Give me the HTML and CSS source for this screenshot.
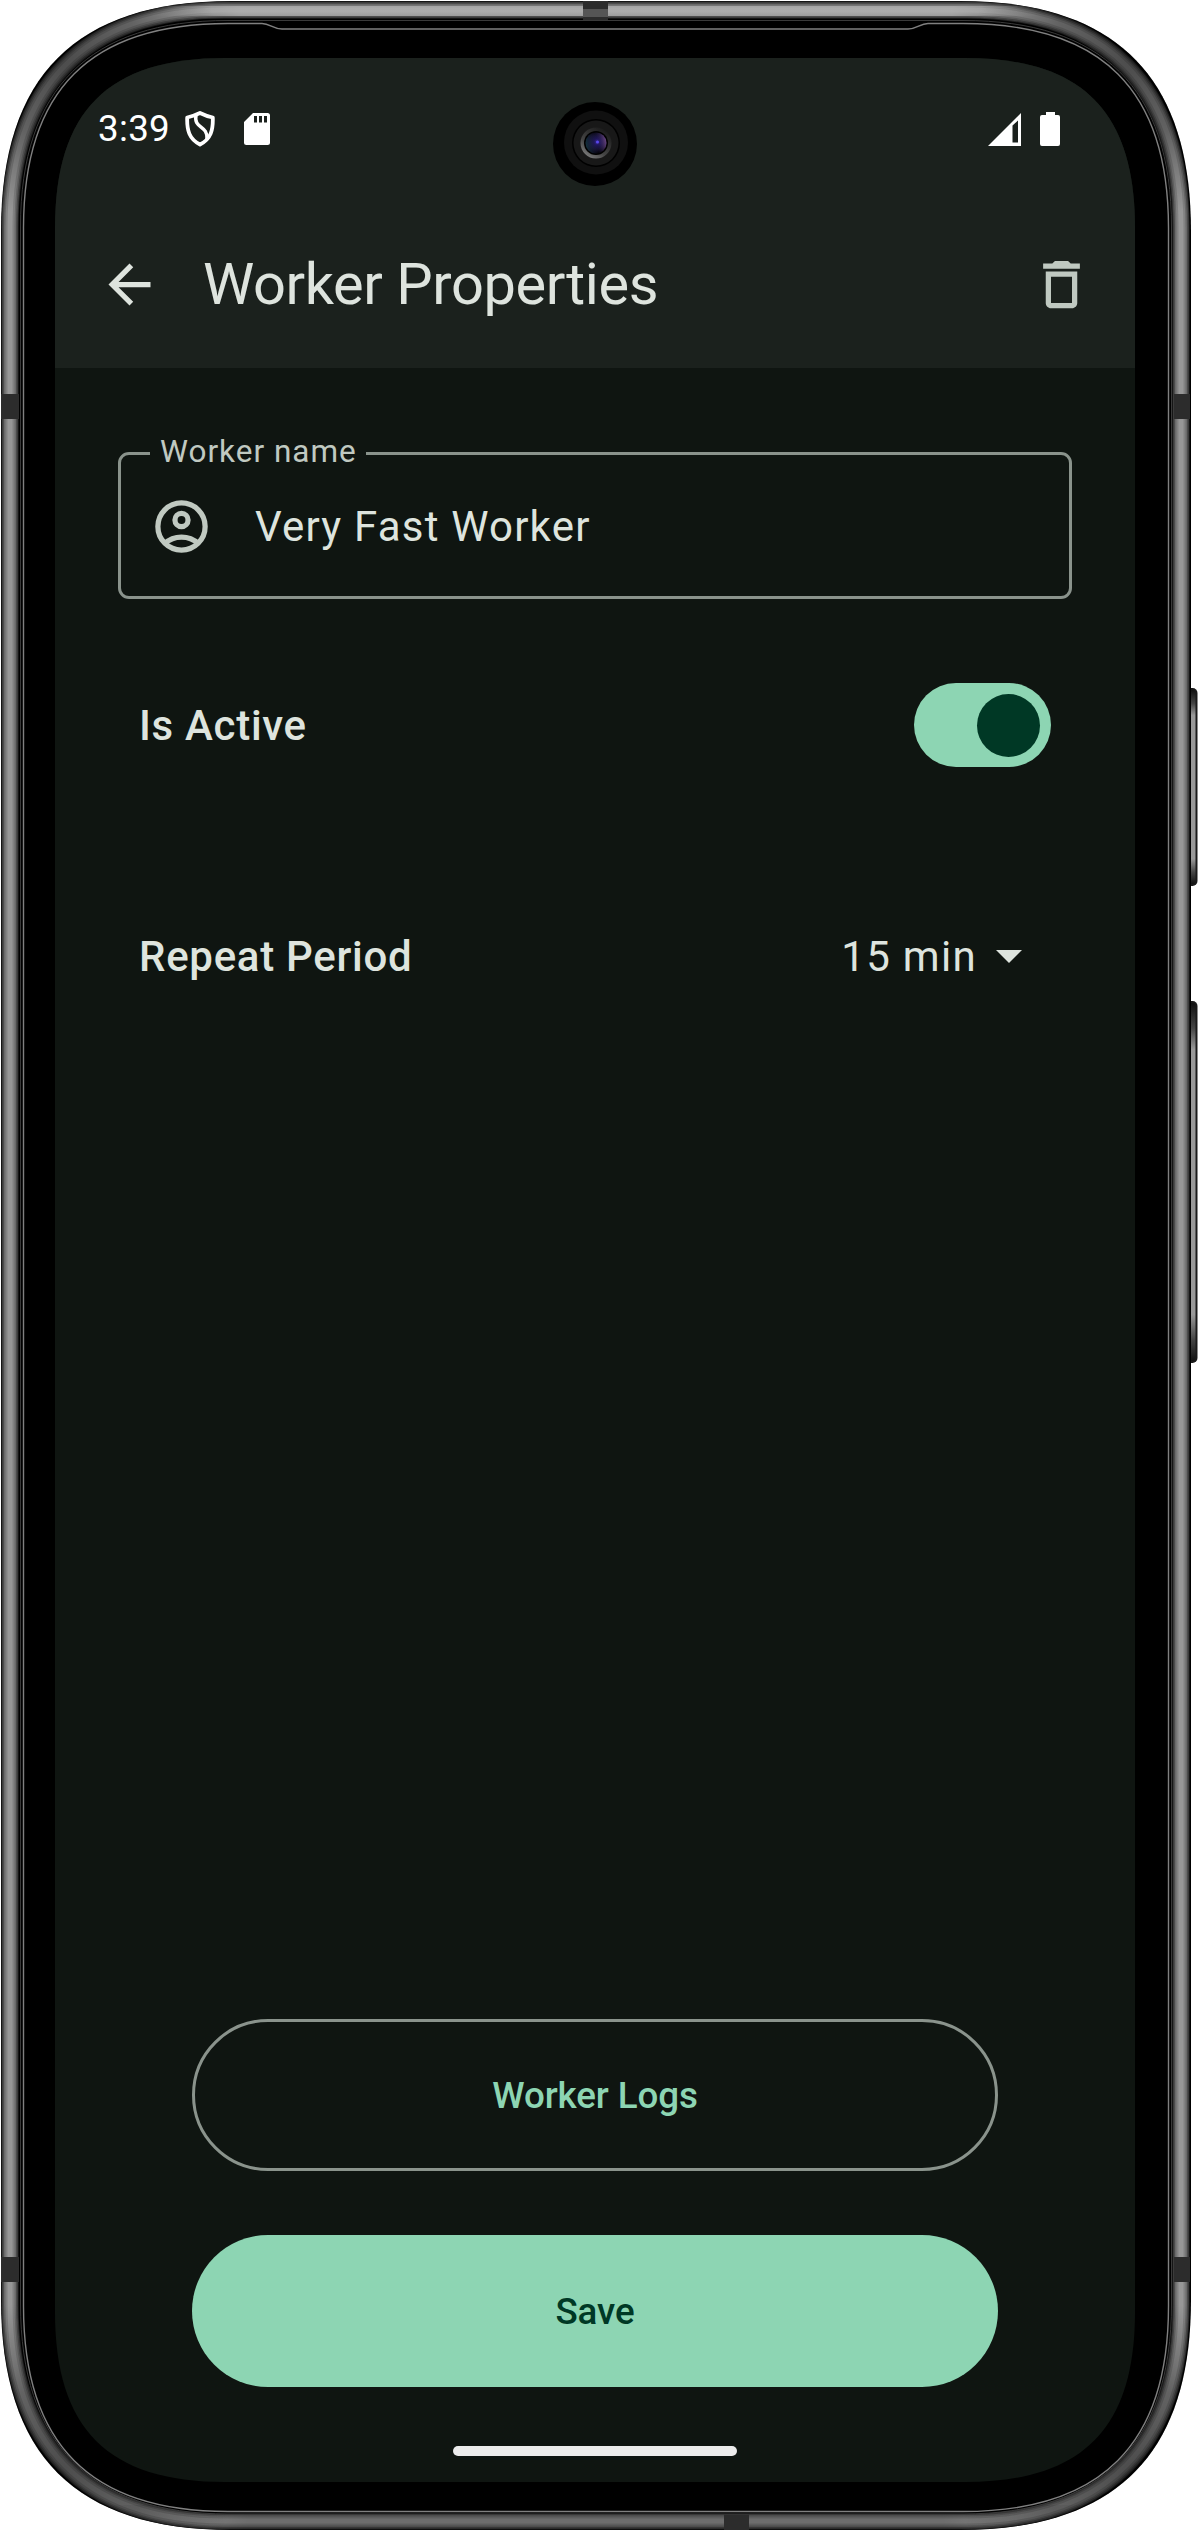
FILE: index.html
```html
<!DOCTYPE html>
<html lang="en">
<head>
<meta charset="utf-8">
<title>Worker Properties</title>
<link rel="stylesheet" href="styles.css">
</head>
<body>
<div class="phone">
  <svg class="frame" viewBox="0 0 1198 2531" aria-hidden="true">
    <defs>
      <path id="shell" d="M10 227C10 87 84 10 224 10H967C1107 10 1181 87 1181 227V2304C1181 2444 1107 2521 967 2521H224C84 2521 10 2444 10 2304Z"/>
      <clipPath id="body"><path d="M1 231C1 76 76 1 231 1H960C1115 1 1191 76 1191 231V2300C1191 2455 1115 2530 960 2530H231C76 2530 1 2455 1 2300Z"/></clipPath>
      <radialGradient id="shade"><stop offset="0" stop-color="#000" stop-opacity=".5"/><stop offset=".5" stop-color="#000" stop-opacity=".35"/><stop offset="1" stop-color="#000" stop-opacity="0"/></radialGradient>
      <linearGradient id="glow"><stop offset="0" stop-color="#b4b4b4" stop-opacity="0"/><stop offset=".1" stop-color="#b4b4b4"/><stop offset=".9" stop-color="#b4b4b4"/><stop offset="1" stop-color="#b4b4b4" stop-opacity="0"/></linearGradient>
      <linearGradient id="dusk"><stop offset="0" stop-color="#000" stop-opacity="0"/><stop offset=".15" stop-color="#000"/><stop offset=".85" stop-color="#000"/><stop offset="1" stop-color="#000" stop-opacity="0"/></linearGradient>
      <linearGradient id="key" x1="0" x2="0" y1="0" y2="1"><stop offset="0" stop-color="#111"/><stop offset=".07" stop-color="#444"/><stop offset=".13" stop-color="#999"/><stop offset=".87" stop-color="#999"/><stop offset=".94" stop-color="#444"/><stop offset="1" stop-color="#111"/></linearGradient>
      <radialGradient id="lens" cx=".55" cy=".45"><stop offset="0" stop-color="#3a2aa0"/><stop offset=".3" stop-color="#1e1658"/><stop offset=".7" stop-color="#151230"/><stop offset="1" stop-color="#07060f"/></radialGradient>
      <linearGradient id="rim" x1=".1" y1="1" x2=".8" y2="0"><stop offset="0" stop-color="#8a8a8a"/><stop offset=".4" stop-color="#444"/><stop offset="1" stop-color="#161616"/></linearGradient>
      <linearGradient id="glint" x1="0" y1=".4" x2="1" y2=".2"><stop offset="0" stop-color="#1d4a5a" stop-opacity=".6"/><stop offset=".5" stop-color="#201850" stop-opacity="0"/><stop offset="1" stop-color="#b070c8" stop-opacity=".7"/></linearGradient>
    </defs>
    <rect x="1186" y="688" width="11.5" height="198" rx="5" fill="#1a1a1a"/>
    <rect x="1186" y="690" width="9.5" height="194" rx="3" fill="url(#key)"/>
    <rect x="1186" y="1001" width="11.5" height="362" rx="5" fill="#1a1a1a"/>
    <rect x="1186" y="1003" width="9.5" height="358" rx="3" fill="url(#key)"/>
    <g clip-path="url(#body)">
      <rect width="1198" height="2531"/>
      <g fill="none">
        <use href="#shell" stroke="#2b2b2b" stroke-width="17"/>
        <use href="#shell" stroke="#4c4c4c" stroke-width="15"/>
        <use href="#shell" stroke="#6a6a6a" stroke-width="12"/>
        <use href="#shell" stroke="#828282" stroke-width="9"/>
        <use href="#shell" stroke="#979797" stroke-width="5"/>
      </g>
      <rect x="150" y="6" width="891" height="10" fill="url(#glow)" opacity=".7"/>
      <rect x="100" y="2505" width="991" height="26" fill="url(#dusk)" opacity=".28"/>
      <circle cx="60" cy="60" r="160" fill="url(#shade)"/>
      <circle cx="1131" cy="60" r="160" fill="url(#shade)"/>
      <circle cx="58" cy="2473" r="175" fill="url(#shade)"/>
      <circle cx="1133" cy="2473" r="175" fill="url(#shade)"/>
      <g fill="#2c2c2c">
        <rect x="583" y="1" width="25" height="20"/>
        <rect x="583" y="9" width="25" height="8" fill="#555"/>
        <rect x="1" y="394" width="18" height="25"/>
        <rect x="1174" y="394" width="16" height="25"/>
        <rect x="1" y="2257" width="18" height="25"/>
        <rect x="1174" y="2257" width="16" height="25"/>
        <rect x="724" y="2514" width="25" height="16"/>
      </g>
    </g>
    <path fill="#000" stroke="#3a3a3a" d="M20.500 227C20.500 88 90 20.500 228 20.500H963C1102 20.500 1171.500 88 1171.500 227V2304C1171.500 2443 1102 2514 963 2514H228C90 2514 20.500 2443 20.500 2304Z"/>
    <path fill="#000" stroke="#808080" stroke-width="1.400" d="M23.500 228C23.500 90 90 23.500 228 23.500H262C270 23.500 273 29 282 29H908C917 29 920 23.500 928 23.500H963C1102 23.500 1168.500 90 1168.500 228V2306C1168.500 2444 1102 2511.500 963 2511.500H228C90 2511.500 23.500 2444 23.500 2306Z"/>
  </svg>

  <main class="screen">
    <header class="top">
      <div class="status">
        <span class="time">3:39</span>
        <svg class="shield" viewBox="0 0 30 36" fill="none" stroke="#fff" stroke-width="3.800" stroke-linejoin="round"><path d="M15 2C10 4.500 6.500 5.500 2.200 6.500C1.800 19 4 28 15 33.500C26 28 28.200 19 27.800 6.500C23 5.500 20 4.500 15 2Z"/><path d="M11 4.500C8.500 18 23 14 22 28" stroke-width="3.400"/></svg>
        <svg class="sd" viewBox="0 0 26 32"><path fill="#fff" fill-rule="evenodd" d="M9 0H23.500Q26 0 26 2.500V29.500Q26 32 23.500 32H2.500Q0 32 0 29.500V9ZM10 3V9.500H13V3ZM15 3V9.500H18V3ZM20 3V9.500H23V3Z"/></svg>
        <svg class="signal" viewBox="0 0 33 33"><path fill="#fff" fill-rule="evenodd" d="M33 0V33H0ZM24.500 12.500V29.500H30V7.500Z"/></svg>
        <svg class="battery" viewBox="0 0 20 34"><path fill="#fff" d="M6 0H15V3H18Q20 3 20 5V32Q20 34 18 34H2Q0 34 0 32V5Q0 3 2 3H6Z"/></svg>
      </div>
      <div class="appbar">
        <svg class="icon back" viewBox="0 0 24 24"><path d="M20 11H7.830l5.590-5.590L12 4l-8 8 8 8 1.410-1.410L7.830 13H20z"/></svg>
        <h1>Worker Properties</h1>
        <svg class="icon trash" viewBox="0 0 24 24"><path d="M16 9v10H8V9h8m-1.500-6h-5l-1 1H5v2h14V4h-3.500l-1-1zM18 7H6v12c0 1.100.9 2 2 2h8c1.100 0 2-.9 2-2V7z"/></svg>
      </div>
    </header>

    <section class="form">
      <div class="field">
        <span class="label">Worker name</span>
        <svg class="icon" viewBox="0 0 24 24"><g class="line"><circle cx="12" cy="12" r="9"/><circle cx="12" cy="9.500" r="2.500"/><path d="M5.600 18.500C7.400 16.800 9.600 16 12 16S16.600 16.800 18.400 18.500"/></g></svg>
        <span class="value">Very Fast Worker</span>
      </div>
      <div class="row active">
        <span class="name">Is Active</span>
        <span class="switch"><span class="thumb"></span></span>
      </div>
      <div class="row period">
        <span class="name">Repeat Period</span>
        <span class="select">15 min<svg class="caret" viewBox="0 0 26 13"><path d="M0 0H26L13 13Z"/></svg></span>
      </div>
    </section>

    <footer class="actions">
      <div class="button outlined">Worker Logs</div>
      <div class="button filled">Save</div>
      <div class="home"></div>
    </footer>
  </main>

  <svg class="camera" viewBox="0 0 84 84" aria-hidden="true">
    <circle cx="42" cy="42" r="42"/>
    <circle cx="43" cy="40.500" r="32" fill="#101010"/>
    <circle cx="43" cy="41" r="24"/>
    <circle cx="43" cy="41" r="22.500" fill="#181818"/>
    <circle cx="43" cy="41" r="15.500" fill="url(#rim)"/>
    <circle cx="43" cy="41" r="12"/>
    <circle cx="43" cy="41" r="10.500" fill="url(#lens)"/>
    <circle cx="43" cy="41" r="10.500" fill="url(#glint)"/>
    <circle cx="44.500" cy="40" r="1.500" fill="#5a48f0"/>
  </svg>
</div>
</body>
</html>
```
FILE: styles.css
```css
* { box-sizing: border-box; }

body {
  margin: 0;
  background: #fff;
  font-family: Roboto, "Liberation Sans", sans-serif;
  color: #dee4de;
}

.phone {
  position: relative;
  width: 1198px;
  height: 2531px;
  padding: 58px 63px 49px 55px;
  overflow: hidden;
}

.frame {
  position: absolute;
  inset: 0;
  width: 1198px;
  height: 2531px;
}

.camera {
  position: absolute;
  left: 552.5px;
  top: 102px;
  width: 84px;
  height: 84px;
}

.screen {
  position: relative;
  display: flex;
  flex-direction: column;
  width: 1080px;
  height: 2424px;
  background: #0f1511;
  clip-path: path("M0 170C0 53 53 0 170 0H910C1027 0 1080 53 1080 170V2254C1080 2371 1027 2424 910 2424H170C53 2424 0 2371 0 2254Z");
}

.top {
  height: 310px;
  background: #1b211d;
}

.status {
  display: flex;
  align-items: center;
  height: 142px;
  padding: 0 75px 0 43px;
  color: #fff;
}

.time {
  width: 87px;
  font-size: 36.75px;
  letter-spacing: .3px;
  line-height: 44px;
}

.shield { width: 30px; height: 36px; }
.sd { width: 26px; height: 32px; margin-left: 29px; }
.signal { width: 33px; height: 33px; margin-left: auto; }
.battery { width: 20px; height: 34px; margin-left: 19px; }

.appbar {
  display: flex;
  align-items: center;
  height: 168px;
  padding: 0 42px 0 43px;
}

.icon {
  flex: none;
  width: 63px;
  height: 63px;
  fill: #c0c9c1;
}

.back { fill: #dee4de; }

.line {
  fill: none;
  stroke: #c0c9c1;
  stroke-width: 2;
}

h1 {
  flex: 1;
  margin: 0 0 0 42px;
  font-size: 57.75px;
  font-weight: 400;
  letter-spacing: -.4px;
  line-height: 74px;
}

.form { padding: 84px 63px 0; }

.field {
  position: relative;
  display: flex;
  align-items: center;
  gap: 42px;
  height: 147px;
  padding-left: 29px;
  border: 3px solid #8a938c;
  border-radius: 11px;
}

.field .icon { margin-top: 1px; }

.label {
  position: absolute;
  left: 29px;
  top: -24px;
  width: 216px;
  padding-left: 10px;
  background: #0f1511;
  color: #c0c9c1;
  font-size: 31.5px;
  letter-spacing: 1px;
  line-height: 42px;
  white-space: nowrap;
}

.value,
.select {
  font-size: 42px;
  letter-spacing: 1.31px;
  line-height: 63px;
}

.value {
  margin-top: 1px;
  letter-spacing: 1.2px;
}

.row {
  display: flex;
  align-items: center;
  justify-content: space-between;
  height: 84px;
  padding: 0 21px;
}

.active { margin-top: 84px; }
.period { margin-top: 147px; padding-right: 50px; }

.name {
  font-size: 42px;
  font-weight: 500;
  letter-spacing: .7px;
}

.switch {
  display: flex;
  align-items: center;
  justify-content: flex-end;
  width: 137px;
  height: 84px;
  padding-right: 11px;
  border-radius: 42px;
  background: #8dd5b3;
}

.thumb {
  width: 63px;
  height: 63px;
  border-radius: 50%;
  background: #003825;
}

.select {
  display: flex;
  align-items: center;
}

.caret {
  width: 26px;
  height: 13px;
  margin-left: 19px;
  fill: #dee4de;
}

.actions {
  display: flex;
  flex-direction: column;
  align-items: center;
  margin-top: auto;
  padding-bottom: 26px;
}

.button {
  display: flex;
  align-items: center;
  justify-content: center;
  width: 806px;
  height: 152px;
  border-radius: 76px;
  font-size: 36.75px;
  font-weight: 500;
  letter-spacing: -.1px;
}

.outlined {
  border: 3px solid #8a938c;
  color: #8dd5b3;
}

.filled {
  margin-top: 64px;
  background: #8dd5b3;
  color: #003825;
}

.home {
  width: 284px;
  height: 10px;
  margin-top: 59px;
  border-radius: 5px;
  background: #ececec;
}
```
